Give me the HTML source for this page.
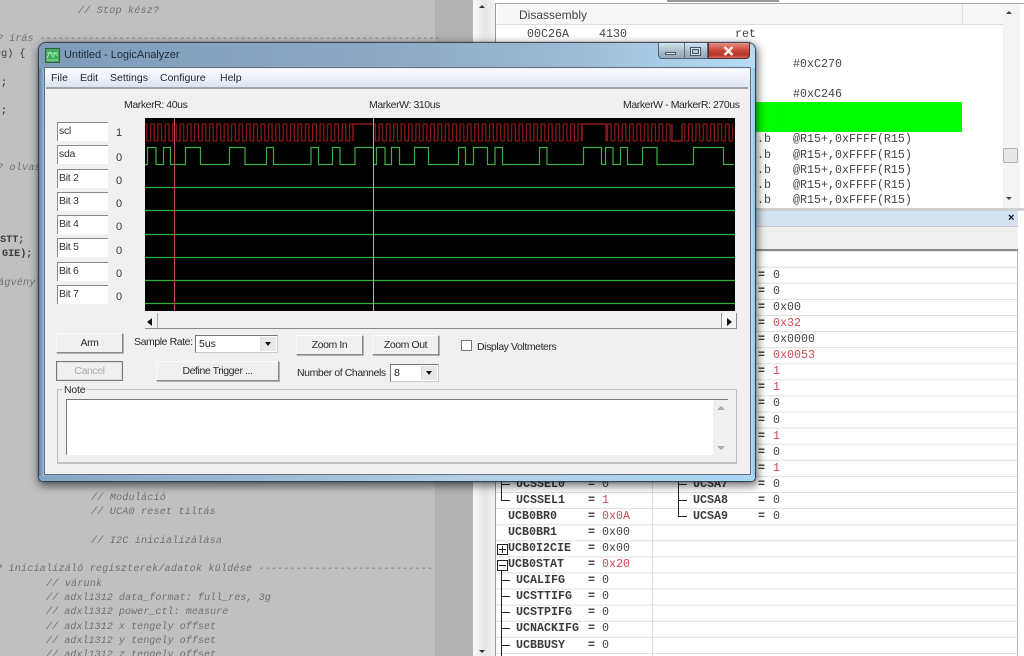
<!DOCTYPE html>
<html><head><meta charset="utf-8"><title>LogicAnalyzer</title>
<style>
html,body{margin:0;padding:0;background:#fff}
#r{position:relative;width:1024px;height:656px;overflow:hidden;background:#fff;filter:blur(.35px)}
#r div,#r span,#r svg{position:absolute;display:block}
.c,.m,.s,.n{white-space:pre;line-height:14px}
.c{font:italic 10.13px/14px "Liberation Mono",monospace;color:#707070;letter-spacing:.17px}
.a{letter-spacing:0}
.k{font:bold 10.13px/14px "Liberation Mono",monospace;color:#3c3c3c;white-space:pre}
.m{font:11.67px/14px "Liberation Mono",monospace;color:#444}
.n{font:bold 11.67px/14px "Liberation Mono",monospace;color:#3a3a3a}
.e{color:#d04858!important}
.s{font:10.5px/14px "Liberation Sans",sans-serif;letter-spacing:-.42px;color:#2a2a2a}
.b{background:#f0f0f0;border:1px solid;border-color:#fafafa #8a8a8a #8a8a8a #fafafa;box-shadow:1px 1px 0 #b0b0b0;text-align:center;font:10.5px/18px "Liberation Sans",sans-serif;letter-spacing:-.42px;color:#2a2a2a;box-sizing:border-box}
.f{left:57px;width:51px;height:19px;background:#fff;border-top:1px solid #888;border-left:1px solid #888;box-sizing:border-box;font:10.5px/16px "Liberation Sans",sans-serif;letter-spacing:-.3px;color:#333;padding-left:1px}
.v{left:116px;font:11px/14px "Liberation Sans",sans-serif;color:#333}
.cb{background:#fff;border:1px solid;border-color:#777 #ccc #ccc #777;box-sizing:border-box;font:10.5px/17px "Liberation Sans",sans-serif;color:#222;padding-left:3px}
.ar{right:1px;top:1px;width:15px;bottom:1px;background:#e8e8e8;border-left:1px solid #ddd}
.ar:after{content:"";position:absolute;left:4px;top:5px;border:3.5px solid transparent;border-top:4px solid #111}
</style></head><body><div id="r">

<!-- left code editor background -->
<div style="left:0;top:0;width:435px;height:656px;background:#c0c0c0"></div>
<div style="left:435px;top:0;width:38px;height:656px;background:#b3b3b3"></div>
<div style="left:473px;top:0;width:22px;height:656px;background:linear-gradient(90deg,#fafafa,#e6e6e6 55%,#f2f2f2)"></div>
<div style="left:479px;top:2px;border:3px solid transparent;border-bottom:3px solid #333;width:0;height:0"></div>
<div style="left:479px;top:650px;border:3px solid transparent;border-top:3px solid #333;width:0;height:0"></div>

<div class="c" style="left:78px;top:5px">// Stop kész?</div>
<div class="c a" style="left:-3px;top:33px">? írás ------------------------------------------------------------------</div>
<div class="k" style="left:-11px;top:48px;font-weight:normal">reg) {</div>
<div class="k" style="left:1px;top:77px">;</div>
<div class="k" style="left:1px;top:105px">;</div>
<div class="c" style="left:-3px;top:162px">? olvas</div>
<div class="k" style="left:-6px;top:234px">ISTT;</div>
<div class="k" style="left:2px;top:248px">GIE);</div>
<div class="c" style="left:-2px;top:277px">ágvény</div>
<div class="c" style="left:91px;top:492px">// Moduláció</div>
<div class="c" style="left:91px;top:506px">// UCA0 reset tiltás</div>
<div class="c" style="left:91px;top:535px">// I2C inicializálása</div>
<div class="c" style="left:-4px;top:563px">? inicializáló regiszterek/adatok küldése ----------------------------</div>
<div class="c" style="left:46px;top:578px">// várunk</div>
<div class="c a" style="left:46px;top:592px">// adxl1312 data_format: full_res, 3g</div>
<div class="c a" style="left:46px;top:606px">// adxl1312 power_ctl: measure</div>
<div class="c a" style="left:46px;top:621px">// adxl1312 x tengely offset</div>
<div class="c a" style="left:46px;top:635px">// adxl1312 y tengely offset</div>
<div class="c a" style="left:46px;top:649px">// adxl1312 z tengely offset</div>

<!-- Disassembly panel -->
<div style="left:667px;top:0;width:112px;height:2px;background:#999"></div>
<div style="left:495px;top:3px;width:529px;height:1px;background:#aaa"></div>
<div style="left:495px;top:3px;width:1px;height:205px;background:#999"></div>
<div style="left:496px;top:4px;width:524px;height:20px;background:#f6f6f6;border-bottom:1px solid #ddd"></div>
<div style="left:962px;top:4px;width:1px;height:20px;background:#e0e0e0"></div>
<div style="left:496px;top:4px;width:1px;height:20px;background:#fff"></div>
<div class="s" style="left:519px;top:8px;font-size:12px;letter-spacing:0;color:#444">Disassembly</div>
<div class="m" style="left:527px;top:27px">00C26A</div>
<div class="m" style="left:599px;top:27px">4130</div>
<div class="m" style="left:735px;top:27px">ret</div>
<div class="m" style="left:793px;top:57px">#0xC270</div>
<div class="m" style="left:793px;top:87px">#0xC246</div>
<div style="left:740px;top:102px;width:222px;height:30px;background:#00ff00"></div>
<div class="m" style="left:757px;top:132px">.b</div><div class="m" style="left:793px;top:132px">@R15+,0xFFFF(R15)</div>
<div class="m" style="left:757px;top:148px">.b</div><div class="m" style="left:793px;top:148px">@R15+,0xFFFF(R15)</div>
<div class="m" style="left:757px;top:163px">.b</div><div class="m" style="left:793px;top:163px">@R15+,0xFFFF(R15)</div>
<div class="m" style="left:757px;top:178px">.b</div><div class="m" style="left:793px;top:178px">@R15+,0xFFFF(R15)</div>
<div class="m" style="left:757px;top:193px">.b</div><div class="m" style="left:793px;top:193px">@R15+,0xFFFF(R15)</div>
<div style="left:1003px;top:4px;width:17px;height:204px;background:#f4f4f4"></div>
<div style="left:1003px;top:148px;width:13px;height:13px;background:#e8e8e8;border:1px solid #b0b0b0;border-radius:2px"></div>
<div style="left:1006px;top:8px;border:3px solid transparent;border-bottom:3px solid #444;width:0;height:0"></div>
<div style="left:1006px;top:197px;border:3px solid transparent;border-top:3px solid #444;width:0;height:0"></div>
<div style="left:1020px;top:4px;width:4px;height:204px;background:#fff"></div>

<!-- Lower panel -->
<div style="left:495px;top:208px;width:529px;height:3px;background:#d0d0d0"></div>
<div style="left:496px;top:211px;width:522px;height:15px;background:#d4e3f1;border-bottom:1px solid #ccc"></div>
<div class="s" style="left:1008px;top:211px;font:bold 11px/14px 'Liberation Sans',sans-serif;color:#111">×</div>
<div style="left:496px;top:227px;width:522px;height:23px;background:#f0f0f0"></div>
<div style="left:496px;top:249px;width:522px;height:2px;background:#888"></div>
<div style="left:495px;top:251px;width:523px;height:405px;background:#fff linear-gradient(#ddd 1px,transparent 1px) 0 15.7px/100% 16.1px"></div>
<div style="left:495px;top:226px;width:1px;height:430px;background:#999"></div>
<div style="left:652px;top:251px;width:1px;height:405px;background:#ddd"></div>
<div style="left:1017px;top:251px;width:1px;height:405px;background:#bbb"></div>

<!-- tree -->
<div style="left:501px;top:470px;width:1px;height:31px;background:#222"></div>
<div style="left:501px;top:500px;width:9px;height:1px;background:#222"></div>
<div style="left:501px;top:484px;width:9px;height:1px;background:#222"></div>
<div style="left:497px;top:544px;width:9px;height:9px;border:1px solid #222;background:linear-gradient(#222,#222) center/7px 1px no-repeat,linear-gradient(#222,#222) center/1px 7px no-repeat"></div>
<div style="left:497px;top:560px;width:9px;height:9px;border:1px solid #222;background:linear-gradient(#222,#222) center/7px 1px no-repeat"></div>
<div style="left:501px;top:571px;width:1px;height:85px;background:#222"></div>
<div style="left:501px;top:580px;width:9px;height:1px;background:#222"></div>
<div style="left:501px;top:596px;width:9px;height:1px;background:#222"></div>
<div style="left:501px;top:612px;width:9px;height:1px;background:#222"></div>
<div style="left:501px;top:628px;width:9px;height:1px;background:#222"></div>
<div style="left:501px;top:645px;width:9px;height:1px;background:#222"></div>
<div style="left:678px;top:470px;width:1px;height:47px;background:#222"></div>
<div style="left:678px;top:484px;width:9px;height:1px;background:#222"></div>
<div style="left:678px;top:500px;width:9px;height:1px;background:#222"></div>
<div style="left:678px;top:516px;width:9px;height:1px;background:#222"></div>

<!-- left column -->
<div class="n" style="left:516px;top:477px">UCSSEL0</div><div class="n" style="left:588px;top:477px">=</div><div class="m" style="left:602px;top:477px">0</div>
<div class="n" style="left:516px;top:493px">UCSSEL1</div><div class="n" style="left:588px;top:493px">=</div><div class="m e" style="left:602px;top:493px">1</div>
<div class="n" style="left:508px;top:509px">UCB0BR0</div><div class="n" style="left:588px;top:509px">=</div><div class="m e" style="left:602px;top:509px">0x0A</div>
<div class="n" style="left:508px;top:525px">UCB0BR1</div><div class="n" style="left:588px;top:525px">=</div><div class="m" style="left:602px;top:525px">0x00</div>
<div class="n" style="left:508px;top:541px">UCB0I2CIE</div><div class="n" style="left:588px;top:541px">=</div><div class="m" style="left:602px;top:541px">0x00</div>
<div class="n" style="left:508px;top:557px">UCB0STAT</div><div class="n" style="left:588px;top:557px">=</div><div class="m e" style="left:602px;top:557px">0x20</div>
<div class="n" style="left:516px;top:573px">UCALIFG</div><div class="n" style="left:588px;top:573px">=</div><div class="m" style="left:602px;top:573px">0</div>
<div class="n" style="left:516px;top:589px">UCSTTIFG</div><div class="n" style="left:588px;top:589px">=</div><div class="m" style="left:602px;top:589px">0</div>
<div class="n" style="left:516px;top:605px">UCSTPIFG</div><div class="n" style="left:588px;top:605px">=</div><div class="m" style="left:602px;top:605px">0</div>
<div class="n" style="left:516px;top:621px">UCNACKIFG</div><div class="n" style="left:588px;top:621px">=</div><div class="m" style="left:602px;top:621px">0</div>
<div class="n" style="left:516px;top:638px">UCBBUSY</div><div class="n" style="left:588px;top:638px">=</div><div class="m" style="left:602px;top:638px">0</div>

<!-- right column -->
<div class="n" style="left:758px;top:268px">=</div><div class="m" style="left:773px;top:268px">0</div>
<div class="n" style="left:758px;top:284px">=</div><div class="m" style="left:773px;top:284px">0</div>
<div class="n" style="left:758px;top:300px">=</div><div class="m" style="left:773px;top:300px">0x00</div>
<div class="n" style="left:758px;top:316px">=</div><div class="m e" style="left:773px;top:316px">0x32</div>
<div class="n" style="left:758px;top:332px">=</div><div class="m" style="left:773px;top:332px">0x0000</div>
<div class="n" style="left:758px;top:348px">=</div><div class="m e" style="left:773px;top:348px">0x0053</div>
<div class="n" style="left:758px;top:364px">=</div><div class="m e" style="left:773px;top:364px">1</div>
<div class="n" style="left:758px;top:380px">=</div><div class="m e" style="left:773px;top:380px">1</div>
<div class="n" style="left:758px;top:396px">=</div><div class="m" style="left:773px;top:396px">0</div>
<div class="n" style="left:758px;top:413px">=</div><div class="m" style="left:773px;top:413px">0</div>
<div class="n" style="left:758px;top:429px">=</div><div class="m e" style="left:773px;top:429px">1</div>
<div class="n" style="left:758px;top:445px">=</div><div class="m" style="left:773px;top:445px">0</div>
<div class="n" style="left:758px;top:461px">=</div><div class="m e" style="left:773px;top:461px">1</div>
<div class="n" style="left:693px;top:477px">UCSA7</div><div class="n" style="left:758px;top:477px">=</div><div class="m" style="left:773px;top:477px">0</div>
<div class="n" style="left:693px;top:493px">UCSA8</div><div class="n" style="left:758px;top:493px">=</div><div class="m" style="left:773px;top:493px">0</div>
<div class="n" style="left:693px;top:509px">UCSA9</div><div class="n" style="left:758px;top:509px">=</div><div class="m" style="left:773px;top:509px">0</div>

<!-- Window -->
<div style="left:39px;top:43px;width:716px;height:438px;border-radius:7px 7px 4px 4px;background:linear-gradient(90deg,#7f9dbb 0,#8aa6c2 45%,#9dbbd6 75%,#b6dcf6 100%);box-shadow:0 0 1px 1px #2b3a48,1px 3px 9px 2px rgba(0,0,0,.55)"></div>
<div style="left:39px;top:474px;width:716px;height:7px;background:linear-gradient(90deg,#86a6c6,#b4cfe4 60%,#a9d6f4);border-radius:0 0 4px 4px"></div>
<div style="left:39px;top:68px;width:6px;height:408px;background:linear-gradient(90deg,#5f7f9e,#a9c4dc)"></div>
<div style="left:750px;top:68px;width:5px;height:408px;background:linear-gradient(90deg,#bfe3f8,#8fc4ea)"></div>

<svg style="left:45px;top:48px" width="15" height="15" viewBox="0 0 15 15"><rect x=".5" y=".5" width="14" height="14" fill="#3fae5a" stroke="#3c5a44"/><path d="M2 10L5 4L8 9L10 5L13 8M2 5H13M2 12H13" fill="none" stroke="#9fe8a8" stroke-width="1"/></svg>
<div class="s" style="left:64px;top:48px;font-size:11px;letter-spacing:-.03px;color:#1e2a36">Untitled - LogicAnalyzer</div>

<!-- window buttons -->
<div style="left:658px;top:43px;width:50px;height:16px;background:linear-gradient(#d4e4f0,#a9bccb 55%,#96a8b8);border:1px solid #4f6275;border-top:0;border-radius:0 0 0 4px;box-sizing:border-box"></div>
<div style="left:684px;top:43px;width:1px;height:16px;background:#5f7285"></div>
<div style="left:708px;top:43px;width:42px;height:16px;background:linear-gradient(#e58f80,#c9473a 50%,#b9332a 80%,#d26b5c);border:1px solid #5a2a2a;border-top:0;border-radius:0 0 4px 0;box-sizing:border-box"></div>
<div style="left:665px;top:52px;width:11px;height:3px;background:#e6eaee;border:1px solid #4a5a68;box-sizing:border-box"></div>
<div style="left:690px;top:47px;width:11px;height:9px;border:1px solid #48586a;box-sizing:border-box;background:#d9e4ec"></div>
<div style="left:692px;top:49px;width:7px;height:5px;border:1px solid #48586a;box-sizing:border-box;background:#b4c6d4"></div>
<svg style="left:723px;top:46px" width="11" height="10" viewBox="0 0 11 10"><path d="M1.5 1L9.5 9M9.5 1L1.5 9" stroke="#f6eeee" stroke-width="2.6" fill="none"/></svg>

<!-- client -->
<div style="left:45px;top:68px;width:705px;height:406px;background:#f0f0f0;box-shadow:0 0 0 1px #5d7186"></div>
<div style="left:45px;top:69px;width:705px;height:18px;background:linear-gradient(#f8fafd,#eef2f8 45%,#dce4ef)"></div>
<div style="left:46px;top:87px;width:702px;height:2px;background:#a4a4a4"></div>
<div class="s" style="left:51px;top:71px;letter-spacing:0;color:#1c2430">File</div>
<div class="s" style="left:80px;top:71px;letter-spacing:0;color:#1c2430">Edit</div>
<div class="s" style="left:110px;top:71px;letter-spacing:0;color:#1c2430">Settings</div>
<div class="s" style="left:160px;top:71px;letter-spacing:0;color:#1c2430">Configure</div>
<div class="s" style="left:220px;top:71px;letter-spacing:0;color:#1c2430">Help</div>

<div class="s" style="left:124px;top:98px">MarkerR: 40us</div>
<div class="s" style="left:369px;top:98px">MarkerW: 310us</div>
<div class="s" style="left:623px;top:98px">MarkerW - MarkerR: 270us</div>

<!-- channel fields -->
<div class="f" style="top:122px">scl</div><div class="v" style="top:126px">1</div>
<div class="f" style="top:145px">sda</div><div class="v" style="top:151px">0</div>
<div class="f" style="top:169px">Bit 2</div><div class="v" style="top:174px">0</div>
<div class="f" style="top:192px">Bit 3</div><div class="v" style="top:197px">0</div>
<div class="f" style="top:215px">Bit 4</div><div class="v" style="top:220px">0</div>
<div class="f" style="top:238px">Bit 5</div><div class="v" style="top:244px">0</div>
<div class="f" style="top:262px">Bit 6</div><div class="v" style="top:267px">0</div>
<div class="f" style="top:285px">Bit 7</div><div class="v" style="top:290px">0</div>

<!-- plot -->
<svg style="left:145px;top:118px" width="590" height="193" viewBox="145 118 590 193">
<defs><pattern id="clk" patternUnits="userSpaceOnUse" x="145" y="123" width="7.37" height="20"><path d="M0 1H1.84V18H5.53V1H7.37" fill="none" stroke="#9c1c1c" stroke-width="1.1"/></pattern></defs>
<rect x="145" y="118" width="590" height="193" fill="#000"/>
<rect x="145" y="123" width="208" height="20" fill="url(#clk)"/>
<rect x="373" y="123" width="209" height="20" fill="url(#clk)"/>
<rect x="606" y="123" width="66" height="20" fill="url(#clk)"/>
<rect x="682" y="123" width="51" height="20" fill="url(#clk)"/>
<path d="M353 141V124H376M582 141V124H606V141M672 124V141H682V124" fill="none" stroke="#a81f1f" stroke-width="1.2"/>
<path d="M145 164.500H147.500V147.500H156V164.500H163.500V147.500H170.500V164.500H185.500V147.500H200.500V164.500H229.500V147.500H245V164.500H266.500V147.500H273.500V164.500H311V147.500H318.500V164.500H332.500V147.500H340V164.500H355V147.500H373.500V164.500H376.500V147.500H385V164.500H391.500V147.500H399.500V164.500H414.500V147.500H428.500V164.500H458.500V147.500H465.500V164.500H473.500V147.500H487.500V164.500H495V147.500H502.500V164.500H539.500V147.500H547V164.500H583.500V147.500H601.500V164.500H605.500V147.500H613V164.500H620.500V147.500H627.500V164.500H642.500V147.500H657V164.500H693.500V147.500H723.500V164.500H734" fill="none" stroke="#3fae47" stroke-width="1.2"/>
<path d="M145 187.500H735M145 210.500H735M145 234.500H735M145 257.500H735M145 280.500H735M145 303.500H735" stroke="#2fb03a" stroke-width="1.3" fill="none"/>
<path d="M174.500 118V311" stroke="#b85050"/>
<path d="M373.500 118V311" stroke="#b0b0b0"/>
</svg>

<!-- h scrollbar -->
<div style="left:145px;top:313px;width:592px;height:16px;background:#f0f0f0;border-bottom:1px solid #8a8a8a;box-sizing:border-box"></div>
<div style="left:157px;top:313px;width:1px;height:15px;background:#aaa"></div>
<div style="left:721px;top:313px;width:16px;height:15px;background:#f4f4f4;border-left:1px solid #999;border-right:1px solid #888;box-sizing:border-box"></div>
<div style="left:147px;top:318px;border:4px solid transparent;border-right:5px solid #111;border-left:0;width:0;height:0"></div>
<div style="left:727px;top:318px;border:4px solid transparent;border-left:5px solid #111;border-right:0;width:0;height:0"></div>

<!-- controls -->
<div class="b" style="left:56px;top:333px;width:67px;height:20px">Arm</div>
<div class="b" style="left:56px;top:361px;width:67px;height:20px;color:#aaa;border:1px solid #777;box-shadow:inset 0 0 0 1px #ddd">Cancel</div>
<div class="b" style="left:156px;top:361px;width:123px;height:20px">Define Trigger ...</div>
<div class="b" style="left:296px;top:335px;width:67px;height:20px">Zoom In</div>
<div class="b" style="left:372px;top:335px;width:67px;height:20px">Zoom Out</div>
<div class="s" style="left:134px;top:335px">Sample Rate:</div>
<div class="cb" style="left:195px;top:335px;width:83px;height:18px">5us<div class="ar"></div></div>
<div class="s" style="left:297px;top:366px">Number of Channels</div>
<div class="cb" style="left:390px;top:364px;width:49px;height:18px">8<div class="ar"></div></div>
<div style="left:461px;top:340px;width:11px;height:11px;background:#fff;border:1px solid #777;box-sizing:border-box"></div>
<div class="s" style="left:477px;top:340px">Display Voltmeters</div>

<!-- note -->
<div style="left:57px;top:389px;width:680px;height:75px;border:1px solid #c0c0c0;border-bottom-width:2px;box-sizing:border-box"></div>
<div class="s" style="left:62px;top:383px;background:#f0f0f0;padding:0 2px;letter-spacing:-.2px">Note</div>
<div style="left:66px;top:399px;width:662px;height:56px;background:#fff;border-top:1px solid #777;border-left:1px solid #777;box-sizing:border-box"></div>
<div style="left:713px;top:400px;width:15px;height:55px;background:#f0f0f0"></div>
<div style="left:717px;top:406px;border:4px solid transparent;border-bottom:4px solid #aaa;border-top:0;width:0;height:0"></div>
<div style="left:717px;top:446px;border:4px solid transparent;border-top:4px solid #aaa;border-bottom:0;width:0;height:0"></div>

</div></body></html>
